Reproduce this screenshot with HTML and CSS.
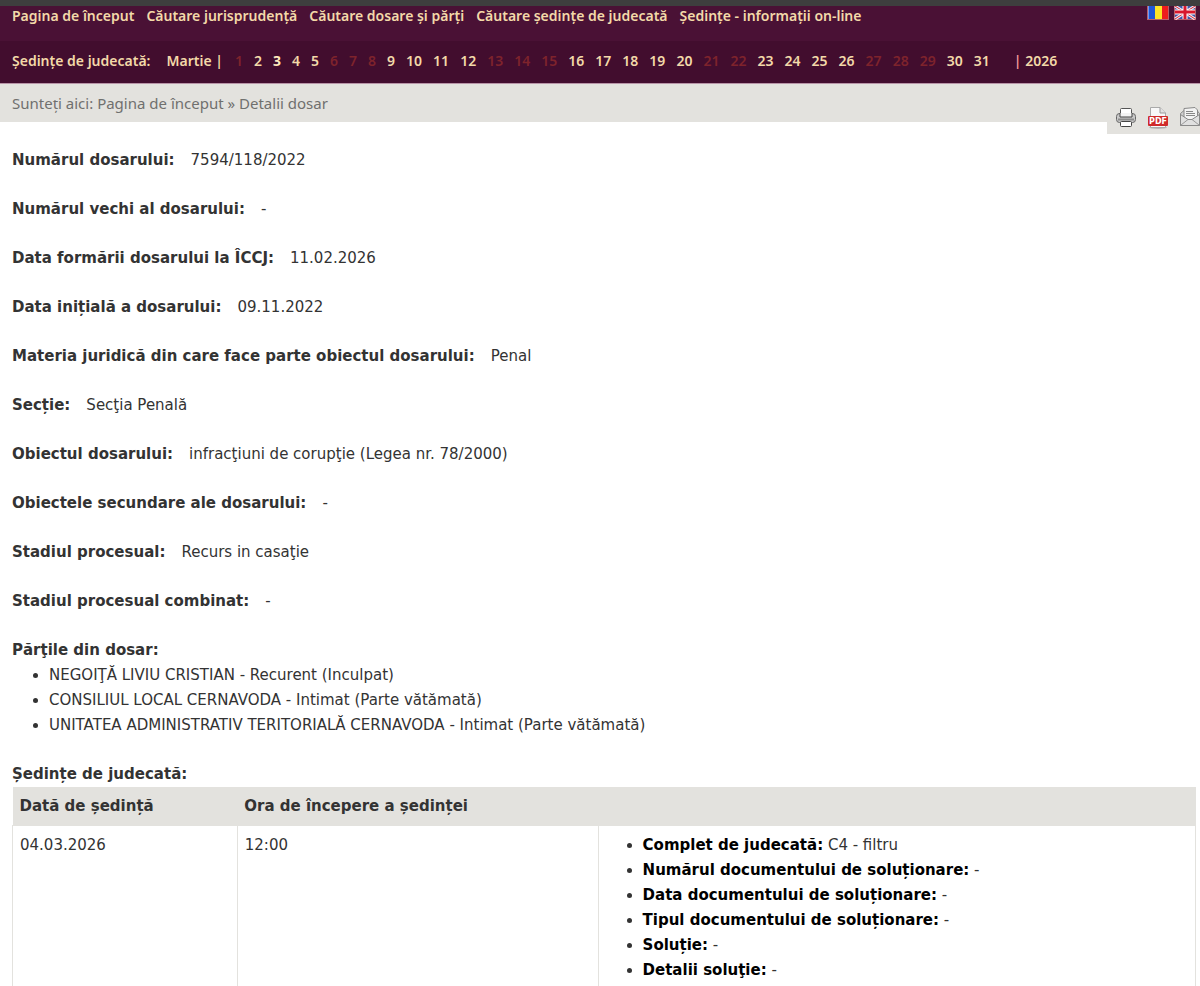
FILE: index.html
```
<!DOCTYPE html>
<html lang="ro">
<head>
    <meta charset="UTF-8">
    <meta name="viewport" content="width=device-width, initial-scale=1.0">
    <title>Detalii dosar</title>
    <link rel="stylesheet" href="styles.css">
</head>
<body>
    <header>
        <nav class="main-nav">
            <ul class="menu">
                <li><a href="#">Pagina de început</a></li>
                <li><a href="#">Căutare jurisprudență</a></li>
                <li><a href="#">Căutare dosare şi părţi</a></li>
                <li><a href="#">Căutare şedinţe de judecată</a></li>
                <li><a href="#">Şedinţe - informaţii on-line</a></li>
            </ul>
            <div class="languages">
                <a href="#" aria-label="Română">
                    <svg width="22" height="14" viewBox="0 0 22 14">
                        <rect width="22" height="14" fill="#b5606c"/>
                        <rect x="1" width="7" height="13" fill="#1f56d8"/>
                        <rect x="8" width="7" height="13" fill="#fde428"/>
                        <rect x="15" width="6" height="13" fill="#ee1c1c"/>
                        <rect x="1" width="1" height="13" fill="#6f9cf0"/>
                    </svg>
                </a>
                <a href="#" aria-label="English">
                    <svg width="22" height="14" viewBox="0 0 22 14">
                        <rect width="22" height="14" fill="#b5606c"/>
                        <rect x="1" width="20" height="13" fill="#3c55a8"/>
                        <path d="M1 0L21 13M21 0L1 13" stroke="#f4e6ea" stroke-width="3"/>
                        <path d="M1 0L21 13M21 0L1 13" stroke="#d8283c" stroke-width="1"/>
                        <path d="M11 0V13M1 6H21" stroke="#fff" stroke-width="5"/>
                        <path d="M11 0V13M1 6H21" stroke="#d8182c" stroke-width="3"/>
                    </svg>
                </a>
            </div>
        </nav>
        <nav class="calendar">
            <span>Ședințe de judecată:</span>
            <a class="month" href="#">Martie |</a>
            <ol class="days">
                <li class="off">1</li>
                <li><a href="#">2</a></li>
                <li class="today"><a href="#">3</a></li>
                <li><a href="#">4</a></li>
                <li><a href="#">5</a></li>
                <li class="off">6</li>
                <li class="off">7</li>
                <li class="off">8</li>
                <li><a href="#">9</a></li>
                <li><a href="#">10</a></li>
                <li><a href="#">11</a></li>
                <li><a href="#">12</a></li>
                <li class="off">13</li>
                <li class="off">14</li>
                <li class="off">15</li>
                <li><a href="#">16</a></li>
                <li><a href="#">17</a></li>
                <li><a href="#">18</a></li>
                <li><a href="#">19</a></li>
                <li><a href="#">20</a></li>
                <li class="off">21</li>
                <li class="off">22</li>
                <li><a href="#">23</a></li>
                <li><a href="#">24</a></li>
                <li><a href="#">25</a></li>
                <li><a href="#">26</a></li>
                <li class="off">27</li>
                <li class="off">28</li>
                <li class="off">29</li>
                <li><a href="#">30</a></li>
                <li><a href="#">31</a></li>
            </ol>
            <span class="year"><span class="bar">|</span> <a href="#">2026</a></span>
        </nav>
    </header>

    <div class="breadcrumb">
        <p>Sunteți aici: <a href="#">Pagina de început</a> » Detalii dosar</p>
        <div class="tools">
            <a href="#" aria-label="Tipărire">
                <svg width="20" height="22" viewBox="0 0 20 22">
                    <rect x="4.500" y="1.500" width="11" height="7" rx="1" fill="#fff" stroke="#555"/>
                    <rect x="0.500" y="6.500" width="19" height="9" rx="3" fill="#c9c9c9" stroke="#666"/>
                    <path d="M4 6V10H16V6" fill="#f4f4f4" stroke="#444"/>
                    <path d="M2 12.500H18" stroke="#8c8c8c" stroke-width="2"/>
                    <rect x="4.500" y="14.500" width="11" height="5" rx="1" fill="#fff" stroke="#444"/>
                </svg>
            </a>
            <a href="#" aria-label="PDF">
                <svg width="20" height="22" viewBox="0 0 20 22">
                    <ellipse cx="10" cy="20.500" rx="9" ry="1.500" fill="#b9b8b5"/>
                    <path d="M2.500 0.500H12L17.500 6V20.500H2.500Z" fill="#f8f8f8" stroke="#aaa"/>
                    <path d="M12 0.500V6H17.500" fill="#e2e2e2" stroke="#999"/>
                    <rect y="9" width="20" height="10" rx="1" fill="#cf2a2a"/>
                    <text class="pdf-label" x="10" y="17" text-anchor="middle">PDF</text>
                </svg>
            </a>
            <a href="#" aria-label="E-mail">
                <svg width="20" height="22" viewBox="0 0 20 22">
                    <path d="M0.500 6.500L4 3.500H17L19.500 6.500V18.500H0.500Z" fill="#d0d0d0" stroke="#888"/>
                    <path d="M4 12V1.500L15 0.500L17.500 3V12L10 14Z" fill="#f3f3f3" stroke="#888"/>
                    <path d="M6 4.500H13M6 6.500H15M6 8.500H15" stroke="#888"/>
                    <path d="M0.500 7.500L8 12.500H12L19.500 7.500V18.500H0.500Z" fill="#e0e0e0" stroke="#8a8a8a"/>
                    <path d="M1 18L8 12.500M19 18L12 12.500" stroke="#999"/>
                </svg>
            </a>
        </div>
    </div>

    <main>
        <dl class="details">
            <div><dt>Numărul dosarului:</dt><dd>7594/118/2022</dd></div>
            <div><dt>Numărul vechi al dosarului:</dt><dd>-</dd></div>
            <div><dt>Data formării dosarului la ÎCCJ:</dt><dd>11.02.2026</dd></div>
            <div><dt>Data inițială a dosarului:</dt><dd>09.11.2022</dd></div>
            <div><dt>Materia juridică din care face parte obiectul dosarului:</dt><dd>Penal</dd></div>
            <div><dt>Secție:</dt><dd>Secţia Penală</dd></div>
            <div><dt>Obiectul dosarului:</dt><dd>infracţiuni de corupţie (Legea nr. 78/2000)</dd></div>
            <div><dt>Obiectele secundare ale dosarului:</dt><dd>-</dd></div>
            <div><dt>Stadiul procesual:</dt><dd>Recurs in casaţie</dd></div>
            <div><dt>Stadiul procesual combinat:</dt><dd>-</dd></div>
        </dl>

        <section>
            <h2>Părţile din dosar:</h2>
            <ul>
                <li>NEGOIŢĂ LIVIU CRISTIAN - Recurent (Inculpat)</li>
                <li>CONSILIUL LOCAL CERNAVODA - Intimat (Parte vătămată)</li>
                <li>UNITATEA ADMINISTRATIV TERITORIALĂ CERNAVODA - Intimat (Parte vătămată)</li>
            </ul>
        </section>

        <section>
            <h2>Ședințe de judecată:</h2>
            <table>
                <thead>
                    <tr>
                        <th class="col-date">Dată de ședință</th>
                        <th class="col-hour">Ora de începere a ședinței</th>
                        <th></th>
                    </tr>
                </thead>
                <tbody>
                    <tr>
                        <td>04.03.2026</td>
                        <td>12:00</td>
                        <td>
                            <ul>
                                <li><strong>Complet de judecată:</strong> C4 - filtru</li>
                                <li><strong>Numărul documentului de soluționare:</strong> -</li>
                                <li><strong>Data documentului de soluționare:</strong> -</li>
                                <li><strong>Tipul documentului de soluționare:</strong> -</li>
                                <li><strong>Soluție:</strong> -</li>
                                <li><strong>Detalii soluţie:</strong> -</li>
                            </ul>
                        </td>
                    </tr>
                </tbody>
            </table>
        </section>
    </main>
</body>
</html>
```

FILE: styles.css
```
* {
    margin: 0;
    padding: 0;
    box-sizing: border-box;
}

body {
    font-family: "DejaVu Sans", sans-serif;
    font-size: 15px;
    line-height: 25px;
    color: #333;
    background-color: #fff;
}

a {
    color: inherit;
    text-decoration: none;
}

a:hover {
    text-decoration: underline;
}

svg {
    display: block;
}

header {
    border-top: 6px solid #3e3e3e;
    border-bottom: 1px solid #b894a8;
    font-family: "Noto Sans", sans-serif;
    font-size: 14px;
    font-weight: 600;
    line-height: 20px;
    color: #f3d9a9;
}

.main-nav {
    display: flex;
    justify-content: space-between;
    height: 35px;
    padding: 0 4px 0 12px;
    background-color: #4a1135;
}

.menu,
.days {
    display: flex;
    list-style: none;
}

.menu {
    gap: 12px;
}

.languages {
    display: flex;
    gap: 5px;
}

.calendar {
    display: flex;
    align-items: center;
    height: 42px;
    padding: 0 12px 2px;
    background-color: #420d2e;
}

.month {
    margin: 0 12px 0 16px;
}

.days {
    gap: 11px;
}

.days .off {
    color: #7e232c;
}

.days .today {
    color: #ffe9bd;
    font-weight: 700;
}

.year {
    margin-left: 24px;
}

.year .bar {
    color: #f29a9a;
}

.breadcrumb {
    position: relative;
    padding: 7px 12px 6px;
    font-family: "Noto Sans", sans-serif;
    color: #70706e;
    background-color: #e3e2de;
}

/* hangs over the lower edge of the breadcrumb bar */
.tools {
    position: absolute;
    top: 16px;
    right: 0;
    display: flex;
    gap: 12px;
    padding: 7px 0 5px 9px;
    background-color: #e3e2de;
}

.pdf-label {
    font-family: "DejaVu Sans", sans-serif;
    font-size: 8px;
    font-weight: bold;
    fill: #fff;
}

main {
    padding: 26px 4px 0 12px;
}

.details div {
    display: flex;
    gap: 16px;
    margin-bottom: 24px;
}

dt {
    font-weight: bold;
}

section {
    margin-bottom: 24px;
}

h2 {
    font-size: 15px;
    font-weight: bold;
}

ul {
    padding-left: 37px;
}

.menu {
    padding-left: 0;
}

table {
    width: 100%;
    border-collapse: collapse;
    table-layout: fixed;
}

th,
td {
    padding: 7px 7px 6px;
    text-align: left;
    vertical-align: top;
}

th {
    background-color: #e3e2de;
}

td {
    padding-bottom: 12px;
    border: 1px solid #e3e2de;
}

strong {
    color: #000;
}

.col-date {
    width: 19%;
}

.col-hour {
    width: 30.5%;
}

@media (max-width: 768px) {
    .main-nav,
    .calendar {
        height: auto;
    }

    .menu,
    .days,
    .calendar,
    .details div {
        flex-wrap: wrap;
    }
}
```
